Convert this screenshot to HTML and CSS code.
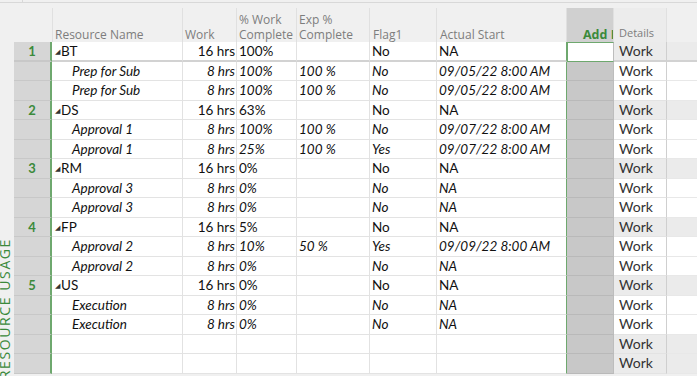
FILE: index.html
```html
<!DOCTYPE html>
<html lang="en">
<head>
  <meta charset="UTF-8">
  <title>Resource Usage</title>
  <link rel="stylesheet" href="styles.css">
</head>
<body>
  <div class="topbar"><span class="tab"></span></div>
  <div class="screen">
    <div class="viewbar"><span class="viewname">RESOURCE USAGE</span></div>

    <div class="sheet">
      <div class="head">
        <div class="c rh"></div>
        <div class="c name">Resource Name</div>
        <div class="c work">Work</div>
        <div class="c pct">% Work<br>Complete</div>
        <div class="c exp">Exp %<br>Complete</div>
        <div class="c flag">Flag1</div>
        <div class="c start">Actual Start</div>
        <div class="c add">Add New Column</div>
        <div class="c det">Details</div>
        <div class="c ts"></div>
      </div>

      <div class="row res sel">
        <div class="c rh">1</div>
        <div class="c name"><span class="tri">◢</span>BT</div>
        <div class="c work">16 hrs</div>
        <div class="c pct">100%</div>
        <div class="c exp"></div>
        <div class="c flag">No</div>
        <div class="c start">NA</div>
        <div class="c add active"></div>
        <div class="c det">Work</div>
        <div class="c ts"></div>
      </div>
      <div class="row asg">
        <div class="c rh"></div>
        <div class="c name">Prep for Sub</div>
        <div class="c work">8 hrs</div>
        <div class="c pct">100%</div>
        <div class="c exp">100 %</div>
        <div class="c flag">No</div>
        <div class="c start">09/05/22 8:00 AM</div>
        <div class="c add"></div>
        <div class="c det">Work</div>
        <div class="c ts"></div>
      </div>
      <div class="row asg">
        <div class="c rh"></div>
        <div class="c name">Prep for Sub</div>
        <div class="c work">8 hrs</div>
        <div class="c pct">100%</div>
        <div class="c exp">100 %</div>
        <div class="c flag">No</div>
        <div class="c start">09/05/22 8:00 AM</div>
        <div class="c add"></div>
        <div class="c det">Work</div>
        <div class="c ts"></div>
      </div>

      <div class="row res">
        <div class="c rh">2</div>
        <div class="c name"><span class="tri">◢</span>DS</div>
        <div class="c work">16 hrs</div>
        <div class="c pct">63%</div>
        <div class="c exp"></div>
        <div class="c flag">No</div>
        <div class="c start">NA</div>
        <div class="c add"></div>
        <div class="c det">Work</div>
        <div class="c ts"></div>
      </div>
      <div class="row asg">
        <div class="c rh"></div>
        <div class="c name">Approval 1</div>
        <div class="c work">8 hrs</div>
        <div class="c pct">100%</div>
        <div class="c exp">100 %</div>
        <div class="c flag">No</div>
        <div class="c start">09/07/22 8:00 AM</div>
        <div class="c add"></div>
        <div class="c det">Work</div>
        <div class="c ts"></div>
      </div>
      <div class="row asg">
        <div class="c rh"></div>
        <div class="c name">Approval 1</div>
        <div class="c work">8 hrs</div>
        <div class="c pct">25%</div>
        <div class="c exp">100 %</div>
        <div class="c flag">Yes</div>
        <div class="c start">09/07/22 8:00 AM</div>
        <div class="c add"></div>
        <div class="c det">Work</div>
        <div class="c ts"></div>
      </div>

      <div class="row res">
        <div class="c rh">3</div>
        <div class="c name"><span class="tri">◢</span>RM</div>
        <div class="c work">16 hrs</div>
        <div class="c pct">0%</div>
        <div class="c exp"></div>
        <div class="c flag">No</div>
        <div class="c start">NA</div>
        <div class="c add"></div>
        <div class="c det">Work</div>
        <div class="c ts"></div>
      </div>
      <div class="row asg">
        <div class="c rh"></div>
        <div class="c name">Approval 3</div>
        <div class="c work">8 hrs</div>
        <div class="c pct">0%</div>
        <div class="c exp"></div>
        <div class="c flag">No</div>
        <div class="c start">NA</div>
        <div class="c add"></div>
        <div class="c det">Work</div>
        <div class="c ts"></div>
      </div>
      <div class="row asg">
        <div class="c rh"></div>
        <div class="c name">Approval 3</div>
        <div class="c work">8 hrs</div>
        <div class="c pct">0%</div>
        <div class="c exp"></div>
        <div class="c flag">No</div>
        <div class="c start">NA</div>
        <div class="c add"></div>
        <div class="c det">Work</div>
        <div class="c ts"></div>
      </div>

      <div class="row res">
        <div class="c rh">4</div>
        <div class="c name"><span class="tri">◢</span>FP</div>
        <div class="c work">16 hrs</div>
        <div class="c pct">5%</div>
        <div class="c exp"></div>
        <div class="c flag">No</div>
        <div class="c start">NA</div>
        <div class="c add"></div>
        <div class="c det">Work</div>
        <div class="c ts"></div>
      </div>
      <div class="row asg">
        <div class="c rh"></div>
        <div class="c name">Approval 2</div>
        <div class="c work">8 hrs</div>
        <div class="c pct">10%</div>
        <div class="c exp">50 %</div>
        <div class="c flag">Yes</div>
        <div class="c start">09/09/22 8:00 AM</div>
        <div class="c add"></div>
        <div class="c det">Work</div>
        <div class="c ts"></div>
      </div>
      <div class="row asg">
        <div class="c rh"></div>
        <div class="c name">Approval 2</div>
        <div class="c work">8 hrs</div>
        <div class="c pct">0%</div>
        <div class="c exp"></div>
        <div class="c flag">No</div>
        <div class="c start">NA</div>
        <div class="c add"></div>
        <div class="c det">Work</div>
        <div class="c ts"></div>
      </div>

      <div class="row res">
        <div class="c rh">5</div>
        <div class="c name"><span class="tri">◢</span>US</div>
        <div class="c work">16 hrs</div>
        <div class="c pct">0%</div>
        <div class="c exp"></div>
        <div class="c flag">No</div>
        <div class="c start">NA</div>
        <div class="c add"></div>
        <div class="c det">Work</div>
        <div class="c ts"></div>
      </div>
      <div class="row asg">
        <div class="c rh"></div>
        <div class="c name">Execution</div>
        <div class="c work">8 hrs</div>
        <div class="c pct">0%</div>
        <div class="c exp"></div>
        <div class="c flag">No</div>
        <div class="c start">NA</div>
        <div class="c add"></div>
        <div class="c det">Work</div>
        <div class="c ts"></div>
      </div>
      <div class="row asg">
        <div class="c rh"></div>
        <div class="c name">Execution</div>
        <div class="c work">8 hrs</div>
        <div class="c pct">0%</div>
        <div class="c exp"></div>
        <div class="c flag">No</div>
        <div class="c start">NA</div>
        <div class="c add"></div>
        <div class="c det">Work</div>
        <div class="c ts"></div>
      </div>

      <div class="row empty">
        <div class="c rh"></div>
        <div class="c name"></div>
        <div class="c work"></div>
        <div class="c pct"></div>
        <div class="c exp"></div>
        <div class="c flag"></div>
        <div class="c start"></div>
        <div class="c add"></div>
        <div class="c det">Work</div>
        <div class="c ts"></div>
      </div>
      <div class="row empty">
        <div class="c rh"></div>
        <div class="c name"></div>
        <div class="c work"></div>
        <div class="c pct"></div>
        <div class="c exp"></div>
        <div class="c flag"></div>
        <div class="c start"></div>
        <div class="c add"></div>
        <div class="c det">Work</div>
        <div class="c ts"></div>
      </div>
    </div>
  </div>
</body>
</html>
```

FILE: styles.css
```css
body {
  margin: 0;
  width: 697px;
  height: 376px;
  overflow: hidden;
  background: #f0f0f0;
  font-family: Lato, "Open Sans", sans-serif;
}
.topbar {
  height: 2px;
  border-bottom: 1px solid #d8d8d8;
}
.tab {
  display: block;
  width: 22px;
  height: 2px;
  border-right: 1px solid #d8d8d8;
}
.screen {
  display: flex;
}
.viewbar {
  width: 14px;
  height: 373px;
  display: flex;
  flex-direction: column;
  justify-content: flex-end;
  overflow: hidden;
}
.viewname {
  writing-mode: vertical-rl;
  transform: rotate(180deg);
  font-family: "Open Sans", sans-serif;
  font-size: 14px;
  letter-spacing: 1.6px;
  line-height: 12px;
  color: #3b8a3b;
  margin-bottom: -3px;
  margin-left: -1px;
  white-space: nowrap;
}
.sheet {
  flex: 1;
  overflow: hidden;
}

/* column widths */
.c {
  box-sizing: border-box;
  flex: none;
  overflow: hidden;
  white-space: nowrap;
  border-right: 1px solid #e2e2e2;
}
.rh { width: 38px; border-right: 2px solid #6ea86e; }
.name { width: 131px; }
.work { width: 54px; text-align: right; }
.pct { width: 60px; }
.exp { width: 73px; }
.flag { width: 67px; }
.start { width: 130px; border-right: 1px solid #6ea86e; }
.add { width: 47px; border-right: 1px solid #bdbdbd; }
.det { width: 53px; border-right: 1px solid #cfcfcf; }
.ts { width: 60px; border-right: none; }

/* header */
.head {
  display: flex;
  height: 39px;
  align-items: flex-end;
}
.head .c {
  height: 34px;
  display: flex;
  align-items: flex-end;
  padding: 0 2px 0 2px;
  font-family: "Open Sans", sans-serif;
  font-size: 12px;
  line-height: 15px;
  color: #7d7d7d;
  border-right-color: #e0e0e0;
}
.head .rh { border-right: 1px solid #e0e0e0; width: 39px; }
.head .name { width: 130px; }
.head .work { justify-content: flex-start; }
.head .flag, .head .start { padding-left: 3px; }
.head .add {
  background: #d0d0d0;
  color: #3b8a3b;
  font-weight: 700;
  padding-left: 16px;
  font-size: 12.5px;
}
.head .det {
  background: #ececec;
  font-size: 11px;
  padding: 0 0 2px 5px;
}

/* rows */
.row {
  display: flex;
  height: 19.5px;
  font-size: 13.5px;
  line-height: 18px;
  color: #111;
  background: #fff;
}
.row .c {
  border-bottom: 1px solid #e3e3e3;
  padding: 0 2px;
}
.row .rh {
  background: #d6d6d6;
  border-bottom-color: #c8c8c8;
  text-align: center;
  color: #3b8a3b;
  font-weight: 700;
  font-size: 13px;
  padding-right: 2px;
}
.row .work { padding-right: 1px; }
.row .add {
  background: #c8c8c8;
  border-bottom-color: #b9b9b9;
}
.row .add.active {
  background: #fff;
  border: 1px solid #6ea86e;
  border-right-color: #bdbdbd;
}
.row .det {
  padding-left: 5px;
  color: #333;
  font-size: 14px;
}
.row .ts { border-bottom-color: #e8e8e8; }
.res .det, .res .ts, .empty .det, .empty .ts { background: #ebebeb; }
.sel .c { border-bottom: 2px solid #d2d2d2; }
.sel .rh { border-bottom-color: #c8c8c8; }

.res .name { padding-left: 3px; }
.tri {
  font-size: 7px;
  vertical-align: 2px;
  margin-right: 1px;
  color: #333;
}
.asg .name { padding-left: 20px; }
.asg .c { font-style: italic; }
.asg .rh, .asg .det { font-style: normal; }
```
